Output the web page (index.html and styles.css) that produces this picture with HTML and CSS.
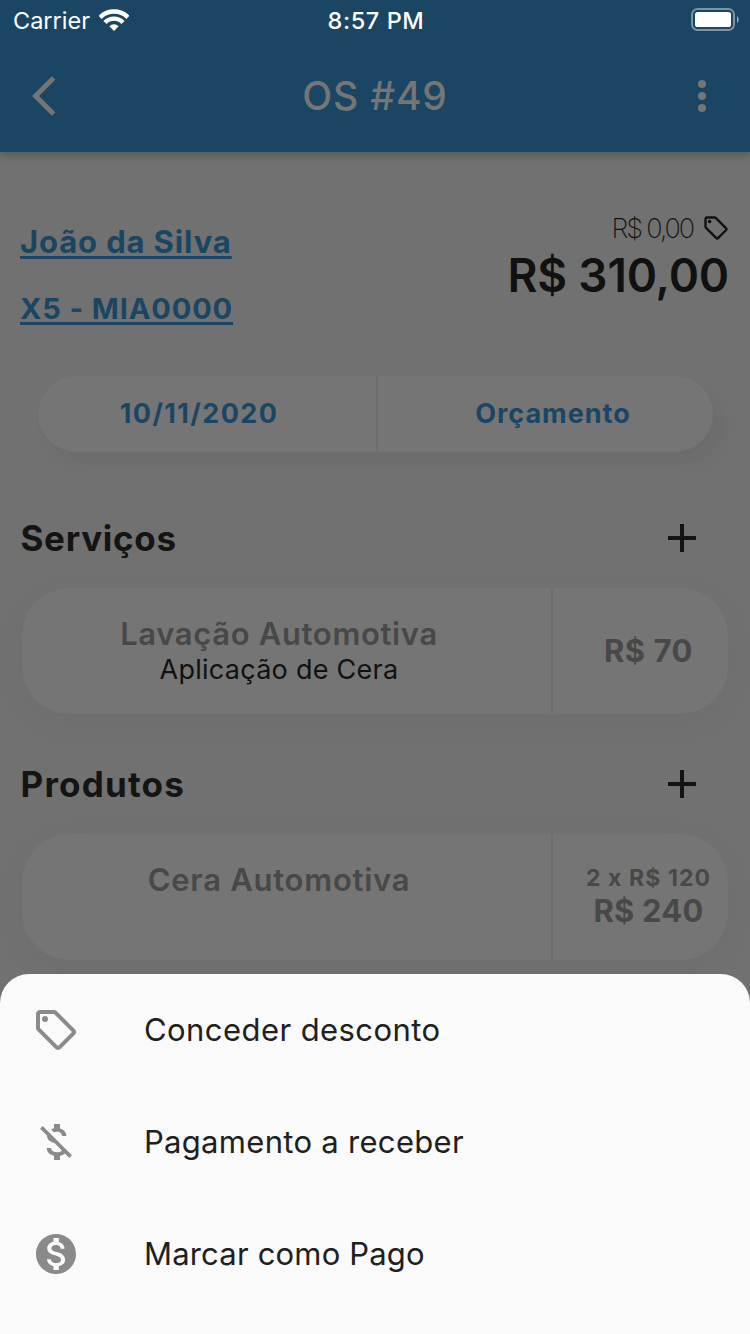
FILE: index.html
```html
<!DOCTYPE html>
<html lang="pt-BR">
<head>
<meta charset="utf-8">
<title>OS #49</title>
<link rel="stylesheet" href="styles.css">
</head>
<body>
<div class="screen">
  <header class="header">
    <div class="status">
      <div class="carrier">
        <span>Carrier</span>
        <svg class="wifi" width="30" height="24" viewBox="0 0 30 24" fill="none" stroke="#fff">
          <path d="M1.1 9.3A19.6 19.6 0 0 1 28.9 9.3" stroke-width="4.6"/>
          <path d="M6 14.5A12.2 12.2 0 0 1 24 14.5" stroke-width="4.3"/>
          <path d="M15 23L10.4 18.2A6.6 6.6 0 0 1 19.6 18.2Z" fill="#fff" stroke="none"/>
        </svg>
      </div>
      <span class="clock">8:57 PM</span>
      <svg class="battery" width="48" height="24" viewBox="0 0 48 24">
        <rect x="1" y="1" width="42" height="21" rx="5.5" fill="none" stroke="#fff" stroke-opacity=".42" stroke-width="2"/>
        <rect x="4" y="4" width="36" height="15" rx="2.6" fill="#fff"/>
        <path d="M46 8a4.4 4.4 0 0 1 0 7z" fill="#fff" fill-opacity=".55"/>
      </svg>
    </div>
    <div class="bar">
      <svg width="24" height="48" viewBox="0 0 12 24" fill="#757575"><path d="M11.67 3.87L9.9 2.1 0 12l9.9 9.9 1.77-1.77L3.54 12z"/></svg>
      <h1 class="title">OS #49</h1>
      <svg width="48" height="48" viewBox="0 0 24 24" fill="#757575"><circle cx="12" cy="6" r="2"/><circle cx="12" cy="12" r="2"/><circle cx="12" cy="18" r="2"/></svg>
    </div>
  </header>

  <main class="content">
    <section class="summary">
      <div class="links">
        <a class="customer">João da Silva</a>
        <a class="vehicle">X5 - MIA0000</a>
      </div>
      <div class="totals">
        <div class="discount">
          <span class="discount-value">R$ 0,00</span>
          <svg width="28" height="28" viewBox="0 0 24 24" fill="#111"><path d="M21.41 11.58l-9-9C12.05 2.22 11.55 2 11 2H4c-1.1 0-2 .9-2 2v7c0 .55.22 1.05.59 1.42l9 9c.36.36.86.58 1.41.58s1.05-.22 1.41-.59l7-7c.37-.36.59-.86.59-1.41s-.23-1.06-.59-1.42zM13 20.01L4 11V4h7v-.01l9 9-7 7.02z"/><circle cx="6.5" cy="6.5" r="1.5"/></svg>
        </div>
        <div class="total">R$ 310,00</div>
      </div>
    </section>

    <div class="pill">
      <div class="pill-date"><span class="date">10/11/2020</span></div>
      <div class="pill-status"><span class="state">Orçamento</span></div>
    </div>

    <div class="section-head">
      <h2 class="services">Serviços</h2>
      <svg width="48" height="48" viewBox="0 0 24 24" fill="#141414"><path d="M19 13h-6v6h-2v-6H5v-2h6V5h2v6h6v2z"/></svg>
    </div>
    <div class="card">
      <div class="card-main">
        <span class="item wash">Lavação Automotiva</span>
        <span class="note">Aplicação de Cera</span>
      </div>
      <div class="card-price"><span class="price">R$ 70</span></div>
    </div>

    <div class="section-head">
      <h2 class="products">Produtos</h2>
      <svg width="48" height="48" viewBox="0 0 24 24" fill="#141414"><path d="M19 13h-6v6h-2v-6H5v-2h6V5h2v6h6v2z"/></svg>
    </div>
    <div class="card">
      <div class="card-main">
        <span class="item wax">Cera Automotiva</span>
      </div>
      <div class="card-price card-price-multi">
        <span class="quantity">2 x R$ 120</span>
        <span class="price price-total">R$ 240</span>
      </div>
    </div>
  </main>

  <div class="sheet">
    <div class="option">
      <svg width="48" height="48" viewBox="0 0 24 24" fill="#8a8a8a"><path d="M21.41 11.58l-9-9C12.05 2.22 11.55 2 11 2H4c-1.1 0-2 .9-2 2v7c0 .55.22 1.05.59 1.42l9 9c.36.36.86.58 1.41.58s1.05-.22 1.41-.59l7-7c.37-.36.59-.86.59-1.41s-.23-1.06-.59-1.42zM13 20.01L4 11V4h7v-.01l9 9-7 7.02z"/><circle cx="6.5" cy="6.5" r="1.5"/></svg>
      <span class="grant">Conceder desconto</span>
    </div>
    <div class="option">
      <svg width="48" height="48" viewBox="0 0 24 24" fill="#8a8a8a"><path d="M12.5 6.9c1.78 0 2.44.85 2.5 2.1h2.21c-.07-1.72-1.12-3.3-3.21-3.81V3h-3v2.16c-.53.12-1.03.3-1.48.54l1.47 1.47c.41-.17.91-.27 1.51-.27zM5.33 4.06L4.06 5.33 7.5 8.77c0 2.08 1.56 3.21 3.91 3.91l3.51 3.51c-.34.48-1.05.91-2.42.91-2.06 0-2.87-.92-2.98-2.1h-2.2c.12 2.19 1.76 3.42 3.68 3.83V21h3v-2.15c.96-.18 1.82-.55 2.45-1.12l2.22 2.22 1.27-1.27L5.33 4.06z"/></svg>
      <span class="receivable">Pagamento a receber</span>
    </div>
    <div class="option">
      <svg width="48" height="48" viewBox="0 0 24 24" fill="#8a8a8a"><path d="M12 2C6.48 2 2 6.48 2 12s4.48 10 10 10 10-4.48 10-10S17.52 2 12 2zm1.41 16.09V20h-2.67v-1.93c-1.71-.36-3.16-1.46-3.27-3.4h1.96c.1 1.05.82 1.87 2.65 1.87 1.96 0 2.4-.98 2.4-1.59 0-.83-.44-1.61-2.67-2.14-2.48-.6-4.18-1.62-4.18-3.67 0-1.72 1.39-2.84 3.11-3.21V4h2.67v1.95c1.86.45 2.79 1.86 2.85 3.39H14.3c-.05-1.11-.64-1.87-2.22-1.87-1.5 0-2.4.68-2.4 1.64 0 .84.65 1.39 2.67 1.91s4.18 1.39 4.18 3.91c-.01 1.83-1.38 2.83-3.12 3.16z"/></svg>
      <span class="paid">Marcar como Pago</span>
    </div>
  </div>
</div>
</body>
</html>
```
FILE: styles.css
```css
* { box-sizing: border-box; margin: 0; padding: 0; }
body { font-family: Inter, "Liberation Sans", sans-serif; background: #717171; color: #111; }
svg { display: block; flex: none; }
span, a, h1, h2 { white-space: nowrap; }

.screen { position: relative; width: 750px; height: 1334px; overflow: hidden; background: #717171; }

/* Header */
.header { position: relative; height: 152px; background: #1a4664; box-shadow: 0 3px 9px rgba(0, 0, 0, .26); }
.status { display: grid; grid-template-columns: 1fr auto 1fr; align-items: center; height: 40px; padding: 0 11px 0 13px; color: #fff; font-size: 23.5px; line-height: 40px; }
.carrier { display: flex; align-items: center; gap: 9px; }
.carrier span, .clock { padding-top: 2px; line-height: 38px; }
.clock { font-weight: 550; letter-spacing: .6px; }
.battery { justify-self: end; }
.bar { display: flex; justify-content: space-between; align-items: center; height: 112px; padding: 0 24px 0 32px; }
.title { padding-left: 16px; color: #757575; font-size: 39px; font-weight: 550; letter-spacing: .8px; line-height: 56px; }

/* Customer, vehicle and totals */
.summary { display: flex; justify-content: space-between; height: 224px; padding: 62px 21px 0 20px; }
.links { display: flex; flex-direction: column; align-items: flex-start; gap: 29px; padding-top: 9px; }
.links a { color: #1a4664; font-weight: 700; line-height: 38px; text-decoration: underline 3px; text-decoration-skip-ink: none; }
.customer { font-size: 31px; letter-spacing: .87px; text-underline-offset: 2.5px; }
.vehicle { font-size: 29px; letter-spacing: .9px; text-underline-offset: 2.5px; }
.totals { display: flex; flex-direction: column; align-items: flex-end; gap: 5px; }
.discount { display: flex; align-items: center; gap: 9px; height: 28px; margin-right: -1px; }
.discount-value { padding-top: 2px; font-size: 27px; font-weight: 200; letter-spacing: -2.1px; line-height: 28px; }
.total { font-size: 46px; font-weight: 600; letter-spacing: -.2px; line-height: 56px; }

/* Date and status pill */
.pill { display: flex; width: 675px; height: 76px; margin-left: 38px; border-radius: 38px; background: #757575; color: #1a4664; font-size: 27px; font-weight: 700; box-shadow: 0 1px 1px #6e6e6e, 10px 12px 20px -2px rgba(0, 0, 0, .05); }
.pill > div { display: flex; align-items: center; justify-content: center; padding-bottom: 1px; }
.pill-date { width: 340px; padding-right: 16px; border-right: 2px solid #6e6e6e; }
.pill-status { flex: 1; padding-left: 15px; }
.date { letter-spacing: 1.4px; }
.state { letter-spacing: .98px; }

/* Item sections */
.section-head { display: flex; align-items: center; justify-content: space-between; height: 48px; margin: 62px 44px 26px 20.5px; }
.section-head h2 { color: #141414; font-size: 35px; font-weight: 700; line-height: 48px; }
.services { letter-spacing: .7px; }
.products { letter-spacing: 1.2px; }
.card { display: flex; width: 706px; height: 126px; margin: 0 22px; border-radius: 48px; background: #757575; color: #484848; box-shadow: 0 8px 40px rgba(0, 0, 0, .035); }
.card + .section-head { margin-top: 46px; }
.card-main { display: flex; flex-direction: column; align-items: center; width: 531px; padding: 26px 15px 0 0; border-right: 2px solid #6d6d6d; }
.item { font-size: 31px; font-weight: 600; line-height: 40px; }
.wash { letter-spacing: .65px; }
.wax { letter-spacing: .74px; }
.note { color: #111; font-size: 27px; letter-spacing: .26px; line-height: 31px; }
.card-price { display: flex; flex: 1; flex-direction: column; align-items: center; justify-content: center; padding-left: 16px; }
.price { font-size: 31px; font-weight: 700; letter-spacing: .5px; line-height: 38px; }
.card-price-multi { justify-content: flex-start; padding-top: 30px; }
.quantity { font-size: 23px; font-weight: 700; letter-spacing: 1.1px; line-height: 28px; }
.price-total { letter-spacing: .2px; }

/* Bottom sheet lies over the page */
.sheet { position: absolute; inset: 974px 0 0; border-radius: 29px 29px 0 0; background: #fafafa; }
.option { display: flex; align-items: center; gap: 64px; height: 112px; padding-left: 32px; color: #202020; font-size: 31px; line-height: 40px; }
.grant { letter-spacing: .43px; }
.receivable { letter-spacing: .3px; }
.paid { letter-spacing: .18px; }
```
